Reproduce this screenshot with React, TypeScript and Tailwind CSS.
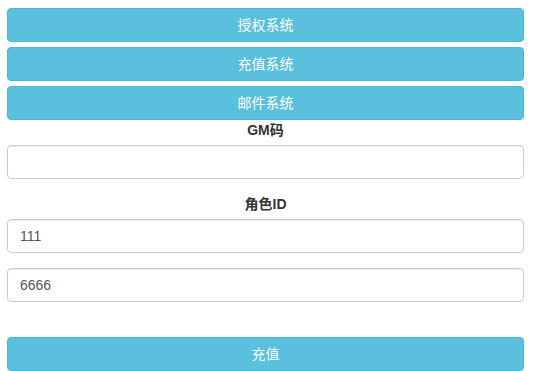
const font = "font-['Liberation_Sans','Noto_Sans_CJK_SC',sans-serif]";

const Btn = ({ label, className = "" }: { label: string; className?: string }) => (
  <button
    type="button"
    className={`block w-full h-[34px] rounded-[4px] border border-[#46b8da] bg-[#5bc0de] text-white text-[14px] leading-[20px] ${className}`}
  >
    {label}
  </button>
);

const Field = ({ value = "", className = "" }: { value?: string; className?: string }) => (
  <input
    type="text"
    defaultValue={value}
    className={`block w-full h-[34px] rounded-[4px] border border-[#ccc] bg-white px-3 text-[14px] text-[#555] outline-none shadow-[inset_0_1px_1px_rgba(0,0,0,0.075)] ${className}`}
  />
);

export default function App() {
  return (
    <div className={`${font} bg-white min-h-[371px] w-[560px] text-[#333]`}>
      <div className="ml-[7px] w-[517px] pt-[8px]">
        <Btn label="授权系统" />
        <Btn label="充值系统" className="mt-[5px]" />
        <Btn label="邮件系统" className="mt-[5px]" />

        <div className="text-center text-[14px] font-bold leading-[20px] mb-[5px]">GM码</div>
        <Field />

        <div className="mt-[15px] text-center text-[14px] font-bold leading-[20px] mb-[5px]">角色ID</div>
        <Field value="111" />
        <Field value="6666" className="mt-[15px]" />

        <Btn label="充值" className="mt-[35px]" />
      </div>
    </div>
  );
}
